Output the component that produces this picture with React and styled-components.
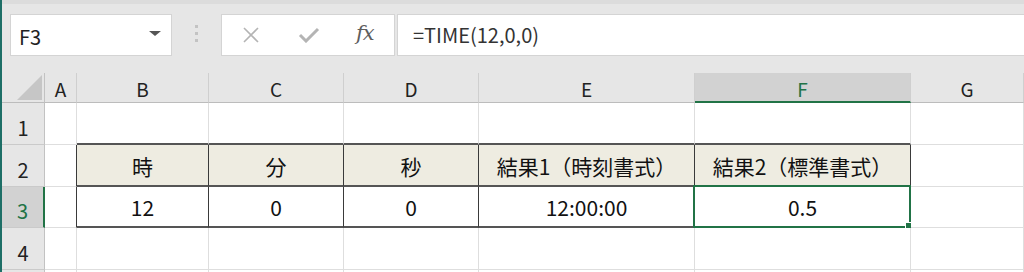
import React from "react";
import styled, { createGlobalStyle } from "styled-components";

const GlobalStyle = createGlobalStyle`
  html, body {
    margin: 0;
    padding: 0;
    background: #ffffff;
  }
  body {
    font-family: "Noto Sans CJK JP", "Noto Sans", sans-serif;
  }
`;

const Window = styled.div`
  width: 1024px;
  height: 272px;
  overflow: hidden;
  border-left: 2px solid #1e6f67;
  box-sizing: border-box;
  display: flex;
  flex-direction: column;
  background: #e6e6e6;
`;

const Toolbar = styled.div`
  height: 73px;
  flex-shrink: 0;
  box-sizing: border-box;
  border-top: 4px solid #dcdcdc;
  padding: 10px 0 0 8px;
  display: flex;
  align-items: flex-start;
`;

const NameBox = styled.div`
  width: 162px;
  height: 42px;
  box-sizing: border-box;
  background: #fff;
  border: 1px solid #d4d4d4;
  display: flex;
  align-items: center;
  justify-content: space-between;
  padding: 2px 10px 0 8px;
  font-family: "Noto Sans CJK JP", sans-serif;
  font-size: 20px;
  color: #222;
`;

const Caret = styled.span`
  width: 0;
  height: 0;
  border-left: 6px solid transparent;
  border-right: 6px solid transparent;
  border-top: 5px solid #555;
  margin-top: -6px;
`;

const Grip = styled.div`
  width: 49px;
  height: 42px;
  display: flex;
  flex-direction: column;
  align-items: center;
  justify-content: center;
  gap: 4px;
  padding-bottom: 3px;
  box-sizing: border-box;
`;

const Dot = styled.span`
  width: 3px;
  height: 3px;
  background: #c3c3c3;
`;

const ButtonBox = styled.div`
  width: 174px;
  height: 42px;
  box-sizing: border-box;
  background: #fff;
  border: 1px solid #d4d4d4;
  display: flex;
  align-items: center;
  padding-left: 20px;
  gap: 38px;
`;

const FxLabel = styled.span`
  font-family: "DejaVu Serif", "Liberation Serif", serif;
  font-style: italic;
  font-size: 21px;
  color: #5e5e5e;
  margin-left: -2px;
  margin-top: -4px;
  letter-spacing: -1px;
`;

const FormulaInput = styled.div`
  flex: 1;
  height: 42px;
  margin-left: 2px;
  box-sizing: border-box;
  background: #fff;
  border: 1px solid #d4d4d4;
  border-right: none;
  display: flex;
  align-items: center;
  padding: 0 0 2px 15px;
  font-family: "Noto Sans CJK JP", sans-serif;
  font-size: 20px;
  color: #333;
`;

const Sheet = styled.div`
  display: grid;
  grid-template-columns: 43px 32px 132px 135px 135px 216px 216px 1fr;
  grid-template-rows: 30px 42px 42px 41px 42px 1fr;
  flex: 1;
  background: #fff;
`;

const ColHead = styled.div`
  background: ${(p) => (p.$active ? "#d2d2d2" : "#e6e6e6")};
  border-right: 1px solid #cfcfcf;
  border-bottom: ${(p) => (p.$active ? "2px solid #217346" : "1px solid #bcbcbc")};
  box-sizing: border-box;
  display: flex;
  align-items: center;
  justify-content: center;
  padding-top: 2px;
  font-family: "Noto Sans CJK JP", sans-serif;
  font-size: 19px;
  color: ${(p) => (p.$active ? "#217346" : "#222")};
`;

const Corner = styled.div`
  background: #e6e6e6;
  border-right: 1px solid #c2c2c2;
  border-bottom: 1px solid #bcbcbc;
  box-sizing: border-box;
  display: flex;
  align-items: flex-end;
  justify-content: flex-end;
  padding: 0 2px 2px 0;
`;

const Triangle = styled.span`
  width: 25px;
  height: 25px;
  background: #c6c6c6;
  clip-path: polygon(100% 0, 100% 100%, 0 100%);
`;

const RowHead = styled.div`
  background: ${(p) => (p.$active ? "#d2d2d2" : "#e6e6e6")};
  border-right: ${(p) => (p.$active ? "2px solid #217346" : "1px solid #c2c2c2")};
  border-bottom: 1px solid #cacaca;
  box-sizing: border-box;
  display: flex;
  align-items: flex-end;
  justify-content: center;
  padding-bottom: 2px;
  font-family: "Noto Sans CJK JP", sans-serif;
  font-size: 20px;
  color: ${(p) => (p.$active ? "#217346" : "#222")};
`;

const Filler = styled.div`
  background: ${(p) => (p.$head ? "#e6e6e6" : "#fff")};
  border-right: 1px solid ${(p) => (p.$head ? "#c2c2c2" : "#dedede")};
`;

const Cell = styled.div`
  position: relative;
  background: ${(p) => (p.$head ? "#eeece1" : "#fff")};
  border-right: 1px solid ${(p) => (p.$rb ? "#3a3a3a" : "#dedede")};
  border-bottom: ${(p) => (p.$bb ? "2px solid #555" : "1px solid #dedede")};
  box-sizing: border-box;
  display: flex;
  align-items: flex-end;
  justify-content: center;
  padding-bottom: 4px;
  font-family: "Noto Sans CJK JP", sans-serif;
  font-size: 21px;
  color: #111;
  white-space: nowrap;
`;

const Selection = styled.div`
  position: absolute;
  left: -2px;
  top: -2px;
  right: -1px;
  bottom: -2px;
  border: 2px solid #217346;
  pointer-events: none;
`;

const FillHandle = styled.span`
  position: absolute;
  right: -5px;
  bottom: -5px;
  width: 7px;
  height: 7px;
  background: #217346;
  border: 1px solid #fff;
`;

const cols = ["A", "B", "C", "D", "E", "F", "G"];

const rows = [
  { n: 1, cells: ["", "", "", "", "", "", ""] },
  { n: 2, cells: ["", "時", "分", "秒", "結果1（時刻書式）", "結果2（標準書式）", ""] },
  { n: 3, cells: ["", "12", "0", "0", "12:00:00", "0.5", ""] },
  { n: 4, cells: ["", "", "", "", "", "", ""] },
];

const inTable = (r, c) => (r === 2 || r === 3) && c >= 1 && c <= 5;

const App = () => {
  return (
    <>
      <GlobalStyle />
      <Window>
        <Toolbar>
          <NameBox>
            F3
            <Caret />
          </NameBox>
          <Grip>
            <Dot />
            <Dot />
            <Dot />
          </Grip>
          <ButtonBox>
            <svg width="18" height="18" viewBox="0 0 18 18">
              <path d="M2 2 L16 16 M16 2 L2 16" stroke="#b4b4b4" strokeWidth="1.6" fill="none" />
            </svg>
            <svg width="22" height="16" viewBox="0 0 22 16">
              <path d="M2 8 L8 14 L20 2" stroke="#b4b4b4" strokeWidth="3" fill="none" />
            </svg>
            <FxLabel>fx</FxLabel>
          </ButtonBox>
          <FormulaInput>=TIME(12,0,0)</FormulaInput>
        </Toolbar>
        <Sheet>
          <Corner>
            <Triangle />
          </Corner>
          {cols.map((c) => (
            <ColHead key={c} $active={c === "F"}>
              {c}
            </ColHead>
          ))}
          {rows.map((row) => (
            <React.Fragment key={row.n}>
              <RowHead $active={row.n === 3}>{row.n}</RowHead>
              {row.cells.map((v, ci) => {
                const table = inTable(row.n, ci);
                const rb = table || (ci === 0 && (row.n === 2 || row.n === 3));
                const bb = table || (row.n === 1 && ci >= 1 && ci <= 5);
                const selected = row.n === 3 && ci === 5;
                return (
                  <Cell key={ci} $head={row.n === 2 && table} $rb={rb} $bb={bb}>
                    {v}
                    {selected && (
                      <Selection>
                        <FillHandle />
                      </Selection>
                    )}
                  </Cell>
                );
              })}
            </React.Fragment>
          ))}
          <Filler $head />
          {cols.map((c) => (
            <Filler key={c} />
          ))}
        </Sheet>
      </Window>
    </>
  );
};

export default App;
